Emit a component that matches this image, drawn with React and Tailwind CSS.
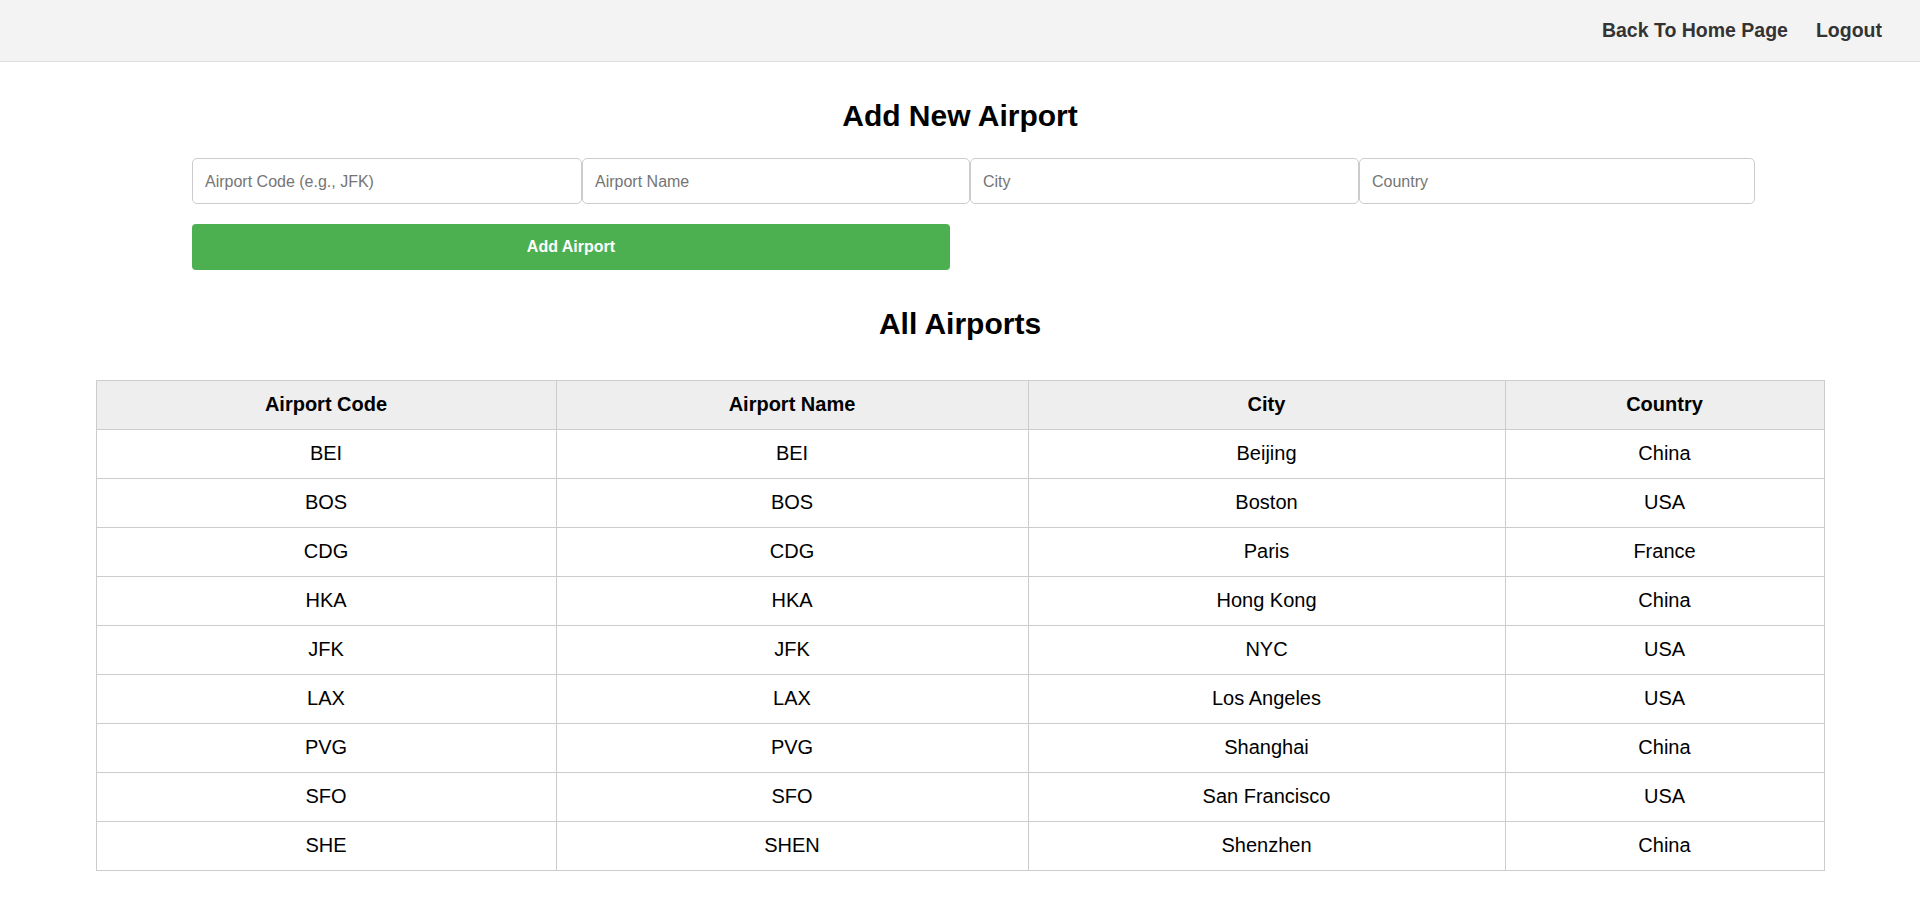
import React, { useState } from "react";

const airports = [
    { code: "BEI", name: "BEI", city: "Beijing", country: "China" },
    { code: "BOS", name: "BOS", city: "Boston", country: "USA" },
    { code: "CDG", name: "CDG", city: "Paris", country: "France" },
    { code: "HKA", name: "HKA", city: "Hong Kong", country: "China" },
    { code: "JFK", name: "JFK", city: "NYC", country: "USA" },
    { code: "LAX", name: "LAX", city: "Los Angeles", country: "USA" },
    { code: "PVG", name: "PVG", city: "Shanghai", country: "China" },
    { code: "SFO", name: "SFO", city: "San Francisco", country: "USA" },
    { code: "SHE", name: "SHEN", city: "Shenzhen", country: "China" },
];

function App() {
    const [form, setForm] = useState({ code: "", name: "", city: "", country: "" });

    const handleChange = (key) => (e) => setForm({ ...form, [key]: e.target.value });

    const inputClass =
        "h-[46px] border border-[#ccc] rounded-[5px] px-3 pt-[2px] text-[16px] text-black outline-none placeholder:text-[#757575] bg-white";

    return (
        <div className="min-h-[908px] bg-white font-['Liberation_Sans',Arial,sans-serif]">
            <header className="h-[62px] bg-[#f3f3f3] border-b border-[#dcdcdc] flex items-center justify-end gap-[28px] pr-[38px]">
                <a href="#" className="text-[19.5px] font-bold text-[#333]">Back To Home Page</a>
                <a href="#" className="text-[19.5px] font-bold text-[#333]">Logout</a>
            </header>

            <h2 className="mt-[36px] text-center text-[30px] leading-[35px] font-bold text-black">Add New Airport</h2>

            <div className="ml-[192px] w-[1563px] mt-[25px]">
                <div className="flex">
                    <input className={`${inputClass} w-[390px]`} placeholder="Airport Code (e.g., JFK)" value={form.code} onChange={handleChange("code")} />
                    <input className={`${inputClass} w-[388px]`} placeholder="Airport Name" value={form.name} onChange={handleChange("name")} />
                    <input className={`${inputClass} w-[389px]`} placeholder="City" value={form.city} onChange={handleChange("city")} />
                    <input className={`${inputClass} w-[396px]`} placeholder="Country" value={form.country} onChange={handleChange("country")} />
                </div>
                <button className="mt-[20px] w-[758px] h-[46px] bg-[#4caf50] rounded-[4px] text-white font-bold text-[16px]">
                    Add Airport
                </button>
            </div>

            <h2 className="mt-[36px] text-center text-[30px] leading-[35px] font-bold text-black">All Airports</h2>

            <table className="mt-[39px] mx-auto w-[1728px] table-fixed border-collapse text-[20px] leading-[24px] text-black">
                <thead>
                    <tr className="bg-[#eee]">
                        <th className="w-[460px] border border-[#ccc] pt-[11px] pb-[13px] font-bold">Airport Code</th>
                        <th className="w-[472px] border border-[#ccc] pt-[11px] pb-[13px] font-bold">Airport Name</th>
                        <th className="w-[477px] border border-[#ccc] pt-[11px] pb-[13px] font-bold">City</th>
                        <th className="w-[319px] border border-[#ccc] pt-[11px] pb-[13px] font-bold">Country</th>
                    </tr>
                </thead>
                <tbody>
                    {airports.map((airport, index) => (
                        <tr key={index}>
                            <td className="border border-[#ccc] pt-[11px] pb-[13px] text-center">{airport.code}</td>
                            <td className="border border-[#ccc] pt-[11px] pb-[13px] text-center">{airport.name}</td>
                            <td className="border border-[#ccc] pt-[11px] pb-[13px] text-center">{airport.city}</td>
                            <td className="border border-[#ccc] pt-[11px] pb-[13px] text-center">{airport.country}</td>
                        </tr>
                    ))}
                </tbody>
            </table>
        </div>
    );
}

export default App;
